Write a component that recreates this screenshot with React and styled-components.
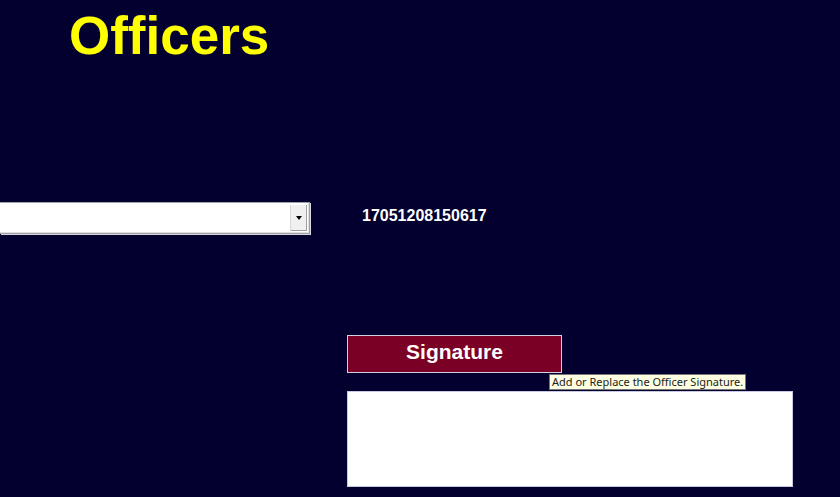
import React from 'react'
import styled, { createGlobalStyle } from 'styled-components'

const Global = createGlobalStyle`
  html, body {
    margin: 0;
    padding: 0;
    background: #030030;
  }
`

const Page = styled.div`
  width: 840px;
  height: 497px;
  background: #030030;
  overflow: hidden;
  font-family: "Liberation Sans", Arial, sans-serif;
  display: flex;
  flex-direction: column;
`

const Title = styled.h1`
  margin: 5px 0 0 69px;
  font-size: 53px;
  line-height: 62px;
  font-weight: 700;
  color: #ffff00;
`

const FieldRow = styled.div`
  display: flex;
  align-items: center;
  margin-top: 134px;
  height: 33px;
`

const Combo = styled.div`
  width: 310px;
  height: 32px;
  box-sizing: border-box;
  background: #fff;
  border: 1px solid #a0a0a8;
  border-left: none;
  box-shadow: inset -1px -1px 0 #e0e0e0, 1px 1px 0 #d8d8e0;
  display: flex;
  justify-content: flex-end;
  align-items: stretch;
  padding: 2px;
`

const DropButton = styled.div`
  width: 16px;
  background: #f0f0f0;
  border-left: 1px solid #d8d8d8;
  box-shadow: inset -1px -1px 0 #a0a0a0;
  display: flex;
  align-items: center;
  justify-content: center;

  &::after {
    content: "";
    border-left: 3px solid transparent;
    border-right: 3px solid transparent;
    border-top: 4px solid #000;
    margin-top: 1px;
  }
`

const Code = styled.div`
  margin-left: 52px;
  margin-top: -4px;
  color: #fff;
  font-size: 16px;
  font-weight: 700;
`

const SigArea = styled.div`
  margin: 101px 0 0 347px;
  display: flex;
  flex-direction: column;
  position: relative;
`

const SigButton = styled.button`
  width: 215px;
  height: 38px;
  box-sizing: border-box;
  background: #7b0026;
  border: 1px solid #d0d0e0;
  color: #fff;
  font-family: "Liberation Sans", Arial, sans-serif;
  font-size: 21px;
  font-weight: 700;
  padding: 0 0 4px;
`

const Tooltip = styled.div`
  position: absolute;
  left: 202px;
  top: 39px;
  background: #ffffe1;
  border: 1px solid #767676;
  color: #222;
  font-family: "Noto Sans", "Open Sans", sans-serif;
  font-size: 11px;
  line-height: 14px;
  padding: 0 2px;
  white-space: nowrap;
`

const SigBox = styled.div`
  margin-top: 18px;
  width: 446px;
  height: 96px;
  box-sizing: border-box;
  background: #fff;
  border: 1px solid #c8c8e0;
`

export default function App() {
  return (
    <Page>
      <Global />
      <Title>Officers</Title>
      <FieldRow>
        <Combo>
          <DropButton />
        </Combo>
        <Code>17051208150617</Code>
      </FieldRow>
      <SigArea>
        <SigButton>Signature</SigButton>
        <Tooltip>Add or Replace the Officer Signature.</Tooltip>
        <SigBox />
      </SigArea>
    </Page>
  )
}
